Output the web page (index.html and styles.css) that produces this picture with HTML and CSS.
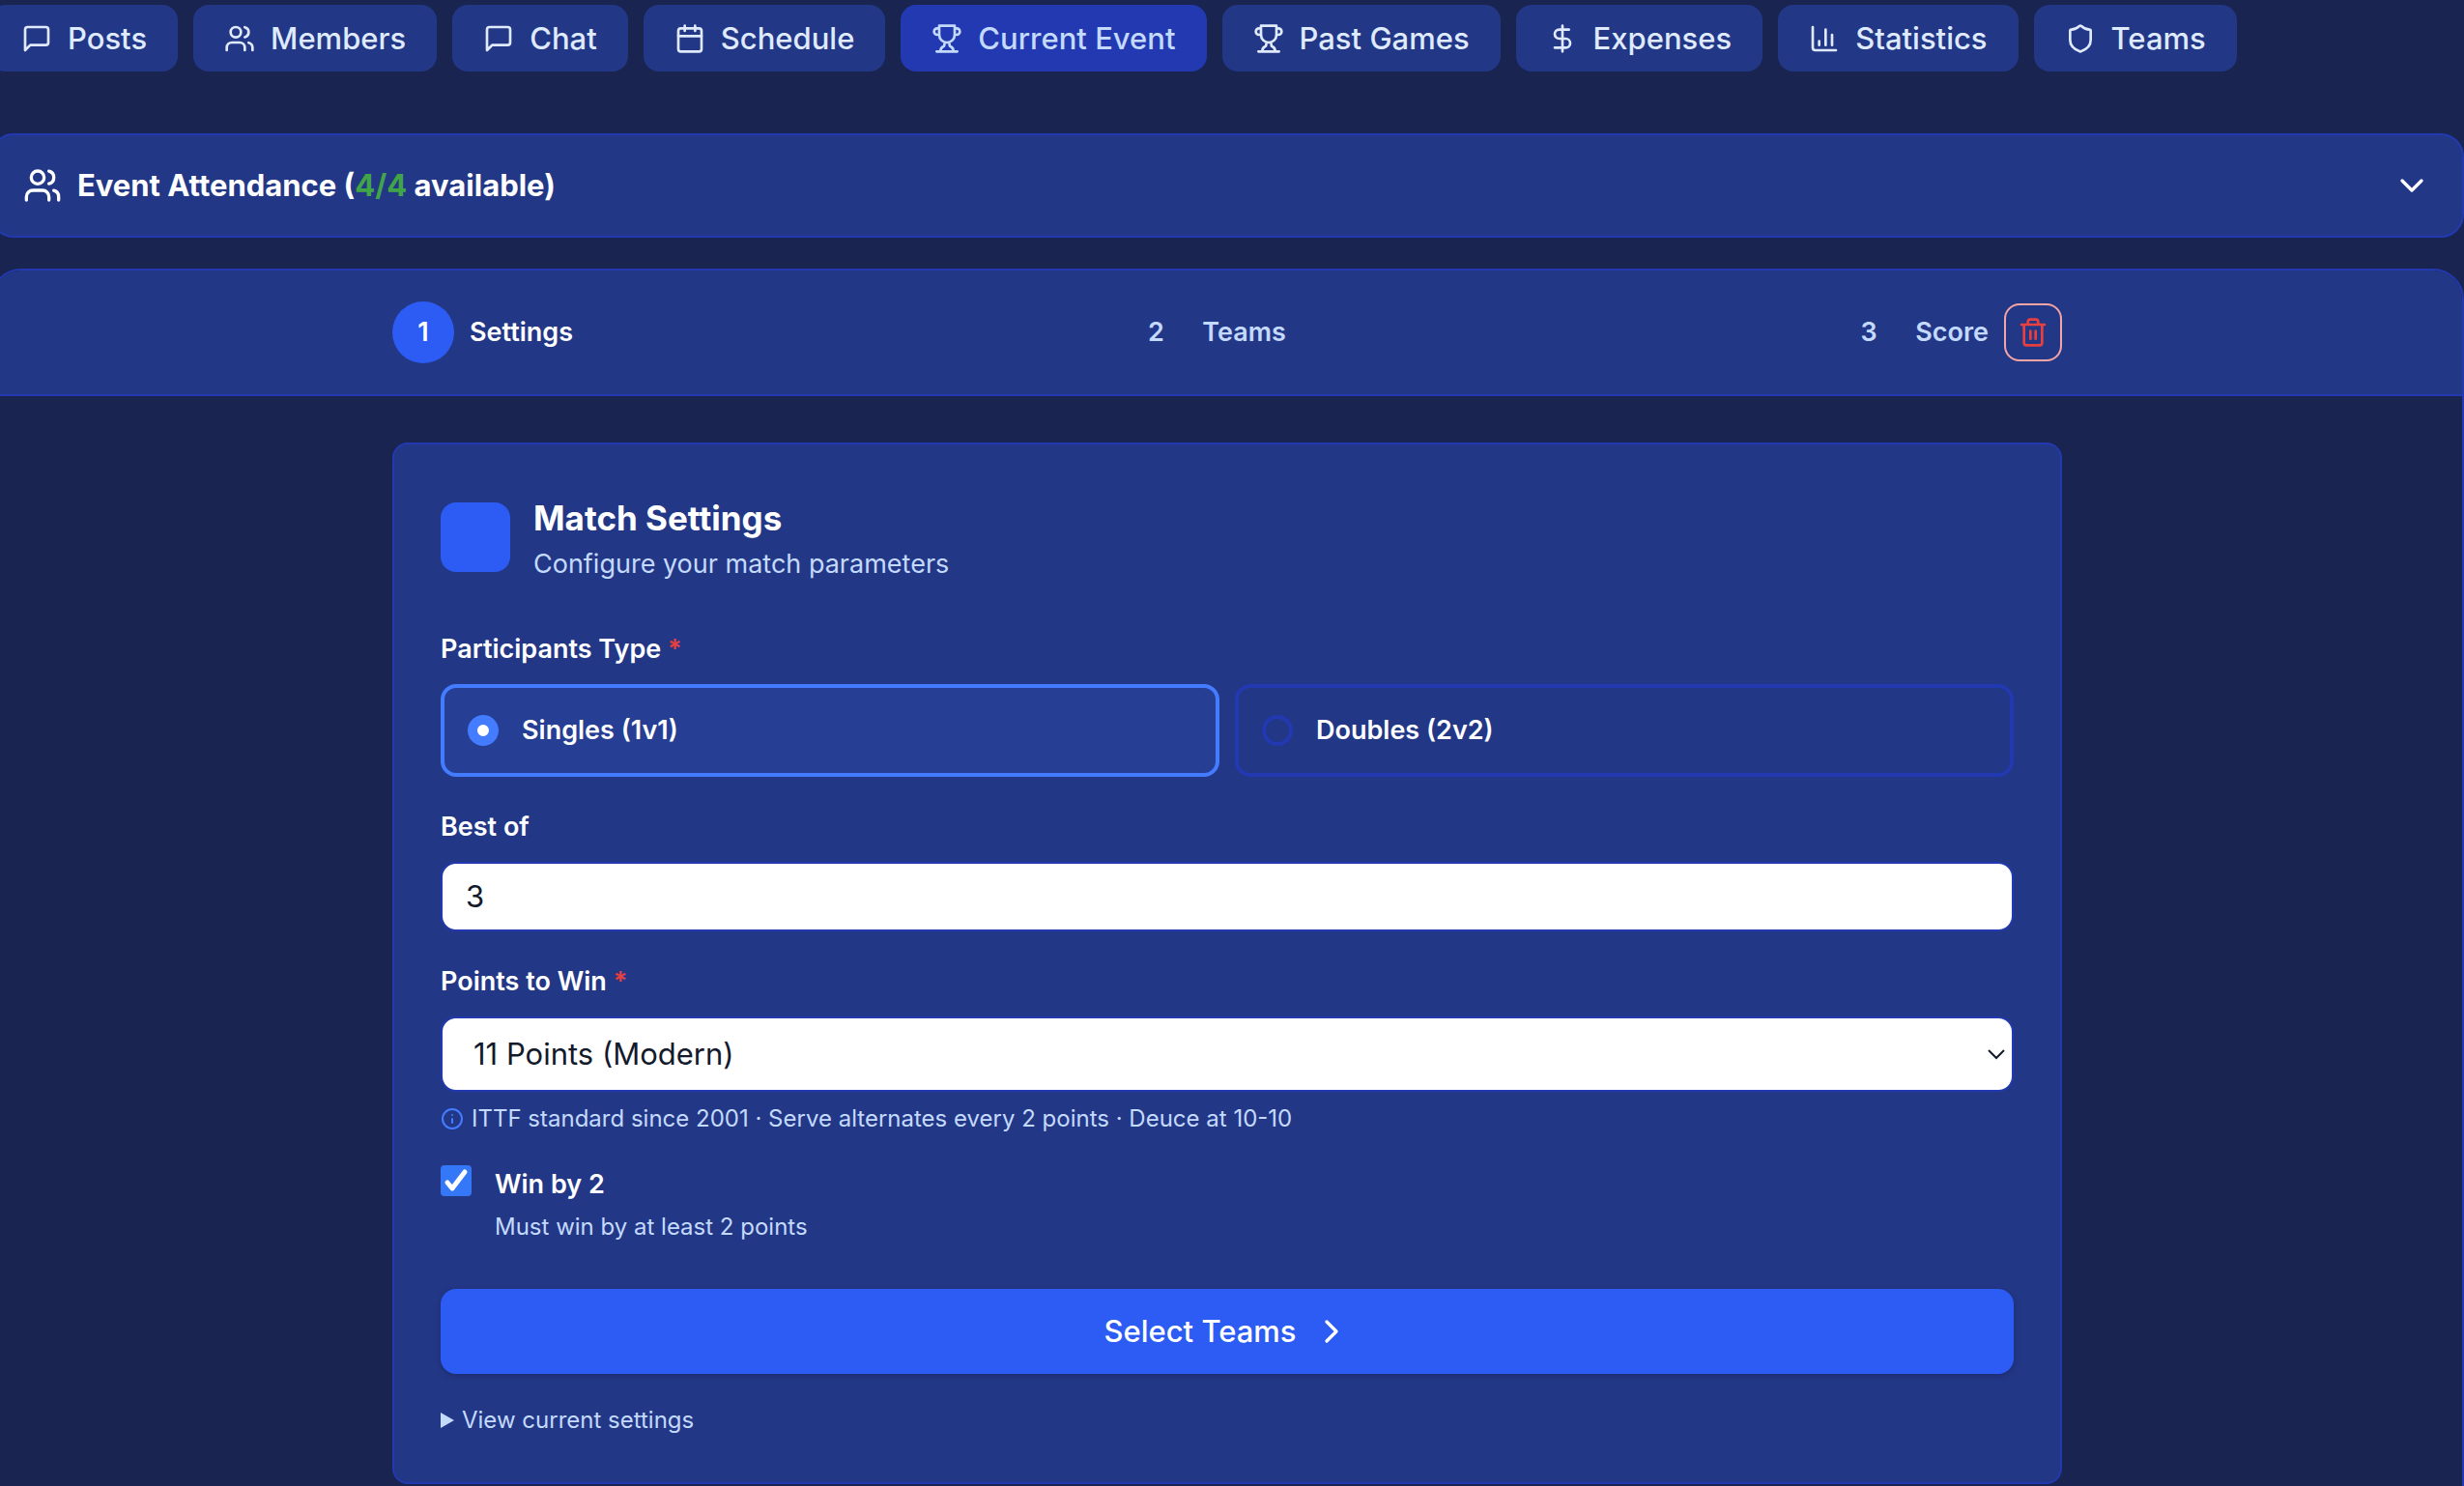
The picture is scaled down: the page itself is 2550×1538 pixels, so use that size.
FILE: index.html
```html
<!DOCTYPE html>
<html lang="en">
<head>
<meta charset="UTF-8">
<meta name="viewport" content="width=device-width, initial-scale=1.0">
<title>Current Event</title>
<link rel="stylesheet" href="styles.css">
</head>
<body>
<div class="page">
    <nav class="tabs">
        <button class="tab" type="button">
            <svg class="icon" viewBox="0 0 24 24"><path d="M21 15a2 2 0 0 1-2 2H7l-4 4V5a2 2 0 0 1 2-2h14a2 2 0 0 1 2 2z"/></svg>
            Posts
        </button>
        <button class="tab" type="button">
            <svg class="icon" viewBox="0 0 24 24"><path d="M16 21v-2a4 4 0 0 0-4-4H6a4 4 0 0 0-4 4v2"/><circle cx="9" cy="7" r="4"/><path d="M22 21v-2a4 4 0 0 0-3-3.87M16 3.13a4 4 0 0 1 0 7.75"/></svg>
            Members
        </button>
        <button class="tab" type="button">
            <svg class="icon" viewBox="0 0 24 24"><path d="M21 15a2 2 0 0 1-2 2H7l-4 4V5a2 2 0 0 1 2-2h14a2 2 0 0 1 2 2z"/></svg>
            Chat
        </button>
        <button class="tab" type="button">
            <svg class="icon" viewBox="0 0 24 24"><path d="M8 2v4M16 2v4M3 10h18"/><rect x="3" y="4" width="18" height="18" rx="2"/></svg>
            Schedule
        </button>
        <button class="tab active" type="button">
            <svg class="icon" viewBox="0 0 24 24"><path d="M6 9H4.5a2.5 2.5 0 0 1 0-5H6M18 9h1.5a2.5 2.5 0 0 0 0-5H18M4 22h16M10 14.66V17c0 .55-.47.98-.97 1.21C7.85 18.75 7 20.24 7 22M14 14.66V17c0 .55.47.98.97 1.21C16.15 18.75 17 20.24 17 22M18 2H6v7a6 6 0 0 0 12 0V2Z"/></svg>
            Current Event
        </button>
        <button class="tab" type="button">
            <svg class="icon" viewBox="0 0 24 24"><path d="M6 9H4.5a2.5 2.5 0 0 1 0-5H6M18 9h1.5a2.5 2.5 0 0 0 0-5H18M4 22h16M10 14.66V17c0 .55-.47.98-.97 1.21C7.85 18.75 7 20.24 7 22M14 14.66V17c0 .55.47.98.97 1.21C16.15 18.75 17 20.24 17 22M18 2H6v7a6 6 0 0 0 12 0V2Z"/></svg>
            Past Games
        </button>
        <button class="tab" type="button">
            <svg class="icon" viewBox="0 0 24 24"><path d="M12 2v20M17 5H9.5a3.5 3.5 0 0 0 0 7h5a3.5 3.5 0 0 1 0 7H6"/></svg>
            Expenses
        </button>
        <button class="tab" type="button">
            <svg class="icon" viewBox="0 0 24 24"><path d="M3 3v16a2 2 0 0 0 2 2h16M18 17V9M13 17V5M8 17v-3"/></svg>
            Statistics
        </button>
        <button class="tab" type="button">
            <svg class="icon" viewBox="0 0 24 24"><path d="M20 13c0 5-3.5 7.5-7.66 8.95a1 1 0 0 1-.67-.01C7.5 20.5 4 18 4 13V6a1 1 0 0 1 1-1c2 0 4.5-1.2 6.24-2.72a1.17 1.17 0 0 1 1.52 0C14.51 3.81 17 5 19 5a1 1 0 0 1 1 1z"/></svg>
            Teams
        </button>
    </nav>

    <button class="attendance" type="button">
        <svg class="icon icon-lg" viewBox="0 0 24 24"><path d="M16 21v-2a4 4 0 0 0-4-4H6a4 4 0 0 0-4 4v2"/><circle cx="9" cy="7" r="4"/><path d="M22 21v-2a4 4 0 0 0-3-3.87M16 3.13a4 4 0 0 1 0 7.75"/></svg>
        <span class="attendance-title">Event Attendance (<span class="count">4/4</span> available)</span>
        <svg class="icon icon-lg" viewBox="0 0 24 24"><path d="m6 9 6 6 6-6"/></svg>
    </button>

    <main class="panel">
        <div class="panel-header">
            <div class="stepper">
                <ol class="steps">
                    <li class="step current"><span class="step-number">1</span>Settings</li>
                    <li class="step"><span class="step-number">2</span>Teams</li>
                    <li class="step"><span class="step-number">3</span>Score</li>
                </ol>
                <button class="delete" type="button" aria-label="Delete event">
                    <svg class="icon" viewBox="0 0 24 24"><path d="M3 6h18M19 6v14a2 2 0 0 1-2 2H7a2 2 0 0 1-2-2V6M8 6V4a2 2 0 0 1 2-2h4a2 2 0 0 1 2 2v2M10 11v6M14 11v6"/></svg>
                </button>
            </div>
        </div>

        <form class="card">
            <div class="card-header">
                <div class="card-badge"></div>
                <div>
                    <h2>Match Settings</h2>
                    <p class="subtitle">Configure your match parameters</p>
                </div>
            </div>

            <fieldset class="field">
                <legend class="label">Participants Type <span class="required">*</span></legend>
                <div class="options">
                    <label class="option selected">
                        <input class="radio" type="radio" name="type" value="singles" checked>
                        Singles (1v1)
                    </label>
                    <label class="option">
                        <input class="radio" type="radio" name="type" value="doubles">
                        Doubles (2v2)
                    </label>
                </div>
            </fieldset>

            <div class="field">
                <label class="label" for="bestOf">Best of</label>
                <input class="text-input" id="bestOf" type="text" inputmode="numeric" value="3">
            </div>

            <div class="field">
                <label class="label" for="points">Points to Win <span class="required">*</span></label>
                <div class="select-wrap">
                    <select class="select" id="points">
                        <option>11 Points (Modern)</option>
                        <option>21 Points (Classic)</option>
                    </select>
                    <svg class="select-arrow" viewBox="0 0 20 12"><path d="M2 2l8 8 8-8"/></svg>
                </div>
                <p class="hint">
                    <svg class="icon hint-icon" viewBox="0 0 24 24"><circle cx="12" cy="12" r="10"/><path d="M12 16v-4M12 8h.01"/></svg>
                    ITTF standard since 2001 · Serve alternates every 2 points · Deuce at 10-10
                </p>
            </div>

            <div class="check-row">
                <div class="check-box">
                    <input class="checkbox" id="winByTwo" type="checkbox" checked>
                    <svg class="check-mark" viewBox="0 0 32 32"><path d="M7 18l5 6L25 7"/></svg>
                </div>
                <div class="check-text">
                    <label class="label" for="winByTwo">Win by 2</label>
                    <p class="small">Must win by at least 2 points</p>
                </div>
            </div>

            <button class="submit" type="button">
                Select Teams
                <svg class="icon icon-lg" viewBox="0 0 24 24"><path d="m9 18 6-6-6-6"/></svg>
            </button>

            <details class="current-settings">
                <summary>View current settings</summary>
                <p class="small">Singles, best of 3, 11 points, win by 2</p>
            </details>
        </form>
    </main>
</div>

<script>
    const options = document.querySelectorAll('.option');

    options.forEach(option => option.addEventListener('change', () => {
        options.forEach(o => o.classList.toggle('selected', o === option));
    }));
</script>
</body>
</html>
```

FILE: styles.css
```css
* {
    box-sizing: border-box;
}

body {
    margin: 0;
    overflow-x: hidden;
    background-color: #1a2451;
    color: #fff;
    font-family: Inter, "Liberation Sans", sans-serif;
    font-size: 28px;
    line-height: 40px;
}

button, input, select {
    font-family: inherit;
}

button {
    cursor: pointer;
}

h2, p, ol {
    margin: 0;
    padding: 0;
}

.page {
    margin-left: -10px; /* bleeds past the left edge of the screen */
    padding-top: 5px;
}

.icon {
    flex: none;
    width: 32px;
    height: 32px;
    fill: none;
    stroke: currentColor;
    stroke-width: 2;
    stroke-linecap: round;
    stroke-linejoin: round;
}

.icon-lg {
    width: 40px;
    height: 40px;
}

/* Tabs */
.tabs {
    display: flex;
    gap: 16px;
    margin-bottom: 64px;
}

.tab {
    display: flex;
    align-items: center;
    gap: 16px;
    padding: 12px 32px;
    border: none;
    border-radius: 16px;
    background-color: #233787;
    color: #dfeafd;
    font-size: 31px;
    font-weight: 500;
    line-height: 45px;
    white-space: nowrap;
}

.tab.active {
    background-color: #2239b1;
    color: #c3dafd;
}

/* Attendance bar */
.attendance {
    display: flex;
    align-items: center;
    gap: 16px;
    width: 100%;
    padding: 32px;
    border: 2px solid #2239b1;
    border-radius: 24px;
    background-color: #233787;
    color: #fff;
    font-size: 31px;
    font-weight: 700;
    line-height: 40px;
    text-align: left;
}

.attendance-title {
    flex: 1;
}

.count {
    color: #41a548;
}

/* Event panel */
.panel {
    margin-top: 32px;
    padding-bottom: 48px;
    border: 2px solid #2239b1;
    border-radius: 32px;
}

.panel-header {
    padding: 32px;
    border-bottom: 2px solid #2239b1;
    border-radius: 30px 30px 0 0;
    background-color: #233787;
}

.stepper {
    display: flex;
    align-items: center;
    gap: 16px;
    max-width: 1728px;
    margin: 0 auto;
}

.steps {
    display: flex;
    flex: 1;
    justify-content: space-between;
    list-style: none;
}

.step {
    display: flex;
    align-items: center;
    gap: 16px;
    color: #c3dafd;
    font-size: 27px;
    font-weight: 600;
}

.step-number {
    width: 64px;
    border-radius: 50%;
    line-height: 64px;
    text-align: center;
}

.step.current {
    color: #fff;
}

.step.current .step-number {
    background-color: #2c5cf3;
}

.delete {
    display: flex;
    padding: 12px;
    border: 2px solid #f6a5a6;
    border-radius: 16px;
    background: none;
    color: #e7403f;
}

/* Settings card */
.card {
    display: flex;
    flex-direction: column;
    gap: 32px;
    max-width: 1728px;
    margin: 48px auto 0;
    padding: 48px;
    border: 2px solid #2239b1;
    border-radius: 16px;
    background-color: #233787;
}

.card-header {
    display: flex;
    align-items: center;
    gap: 24px;
    margin-bottom: 16px;
}

.card-badge {
    width: 72px;
    height: 72px;
    border-radius: 16px;
    background-color: #2c5cf3;
}

h2 {
    font-size: 35px;
    font-weight: 700;
    line-height: 56px;
}

.subtitle {
    color: #c3dafd;
    font-size: 27px;
}

.field {
    margin: 0;
    padding: 0;
    border: none;
}

.label {
    display: block;
    padding: 0;
    font-size: 27px;
    font-weight: 600;
}

.field .label {
    margin-bottom: 16px;
}

.required {
    color: #e7403f;
}

.options {
    display: grid;
    grid-template-columns: 1fr 1fr;
    gap: 16px;
}

.option {
    display: flex;
    align-items: center;
    gap: 24px;
    padding: 24px;
    border: 4px solid #2239b1;
    border-radius: 16px;
    font-size: 27px;
    font-weight: 600;
    cursor: pointer;
}

.option.selected {
    border-color: #447cff;
    background-color: #263e93;
}

.radio {
    appearance: none;
    width: 32px;
    height: 32px;
    margin: 0;
    border: 4px solid #2239b1;
    border-radius: 50%;
}

.radio:checked {
    border: 10px solid #447cff;
    background-color: #fff;
}

.text-input,
.select {
    display: block;
    width: 100%;
    border: 2px solid #2239b1;
    border-radius: 16px;
    background-color: #fff;
    color: #131a2b;
    font-size: 31px;
    line-height: 40px;
}

.text-input {
    padding: 14px 24px;
}

.select-wrap {
    position: relative;
}

.select {
    appearance: none;
    padding: 17px 32px;
}

.select-arrow {
    position: absolute;
    top: 50%;
    right: 8px;
    width: 20px;
    margin-top: -6px;
    fill: none;
    stroke: #131a2b;
    stroke-width: 2;
    pointer-events: none;
}

.hint {
    display: flex;
    align-items: center;
    gap: 8px;
    margin-top: 12px;
    color: #c3dafd;
    font-size: 24px;
    line-height: 32px;
}

.hint-icon {
    width: 24px;
    height: 24px;
    color: #447cff;
}

.check-row {
    display: flex;
    gap: 24px;
}

.check-box {
    position: relative;
    height: 32px;
}

.checkbox {
    display: block;
    appearance: none;
    width: 32px;
    height: 32px;
    margin: 0;
    border: 2px solid #3478f7;
    border-radius: 4px;
}

.checkbox:checked {
    background-color: #3478f7;
}

.check-mark {
    position: absolute;
    inset: 0;
    fill: none;
    stroke: #fff;
    stroke-width: 5;
    stroke-linecap: round;
    stroke-linejoin: round;
    pointer-events: none;
}

.checkbox:not(:checked) + .check-mark {
    display: none;
}

.check-text {
    display: flex;
    flex-direction: column;
    gap: 8px;
}

.small {
    color: #c3dafd;
    font-size: 24px;
    line-height: 32px;
}

.submit {
    display: flex;
    justify-content: center;
    align-items: center;
    gap: 16px;
    margin-top: 16px;
    padding: 24px;
    border: none;
    border-radius: 16px;
    background-color: #2c5cf3;
    box-shadow: 0 2px 6px rgba(0, 0, 0, 0.2);
    color: #fff;
    font-size: 31px;
    font-weight: 500;
    line-height: 40px;
}

.current-settings {
    color: #c3dafd;
    font-size: 24px;
    line-height: 32px;
}

.current-settings summary {
    display: flex;
    align-items: center;
    gap: 8px;
    cursor: pointer;
}

/* disclosure triangle */
.current-settings summary::before {
    content: "";
    width: 14px;
    height: 16px;
    background-color: currentColor;
    clip-path: polygon(0 0, 100% 50%, 0 100%);
}

.current-settings[open] summary::before {
    transform: rotate(90deg);
}
```
